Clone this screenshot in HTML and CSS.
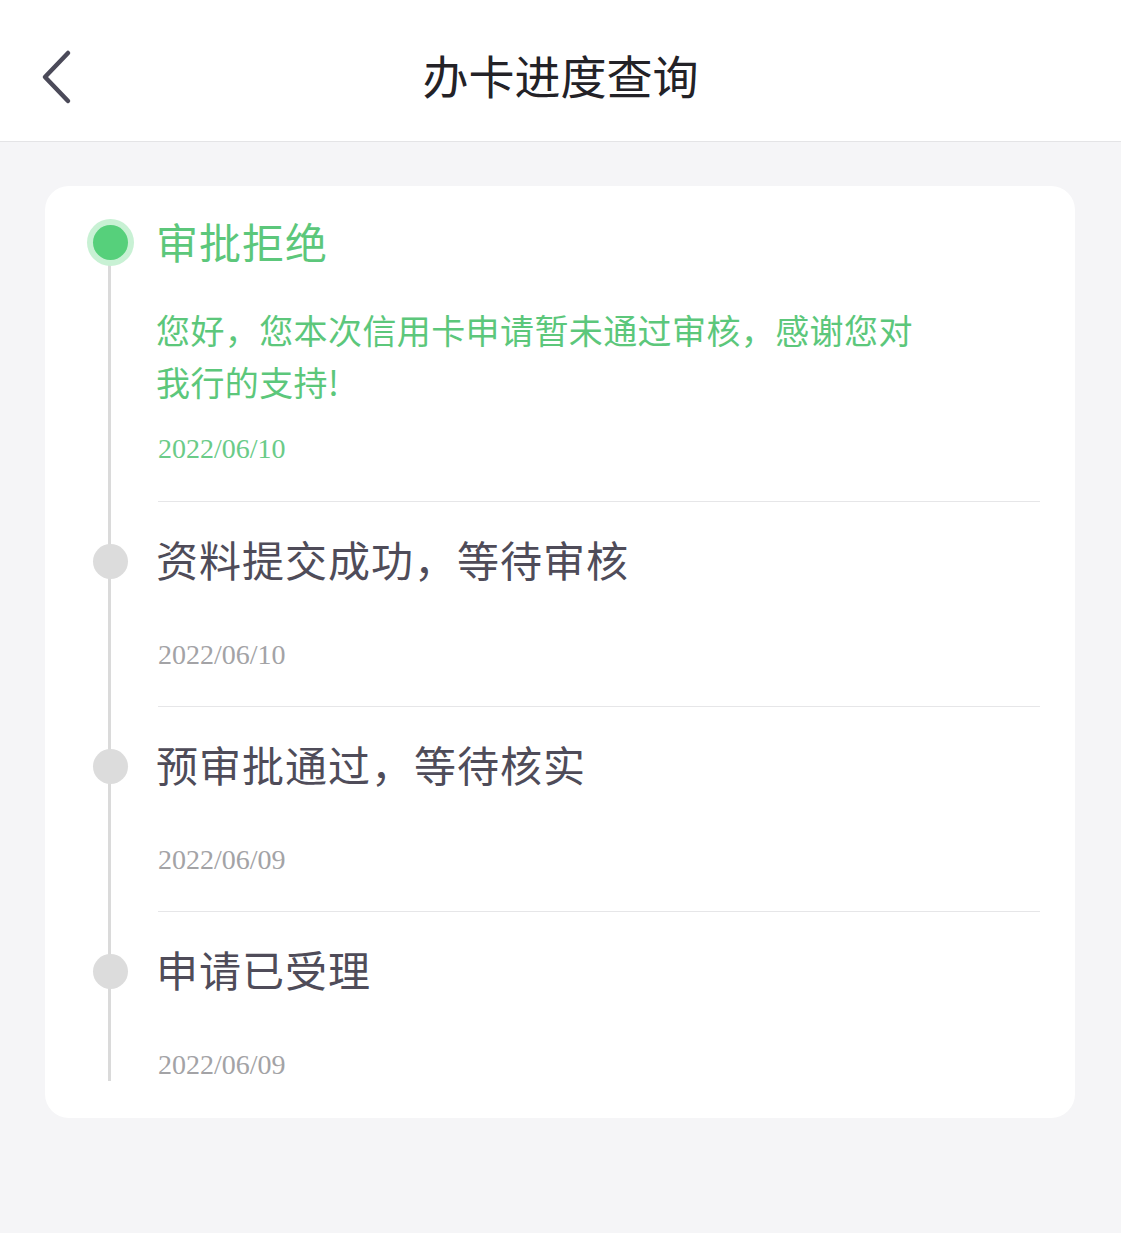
FILE: index.html
```html
<!DOCTYPE html>
<html lang="zh-CN">
<head>
  <meta charset="UTF-8">
  <title>办卡进度查询</title>
  <meta name="viewport" content="width=device-width, initial-scale=1.0">
  <link rel="stylesheet" href="styles.css">
</head>
<body>
  <header class="topbar">
    <a class="back" href="#">
      <svg width="40" height="60" viewBox="0 0 40 60">
        <polyline points="28,6 5,30 28,54" fill="none" stroke="#4b4a59" stroke-width="4.5" stroke-linecap="round" stroke-linejoin="round"/>
      </svg>
    </a>
    <h1>办卡进度查询</h1>
  </header>

  <!-- Progress timeline -->
  <div class="card">
    <div class="step active">
      <span class="dot"></span>
      <div class="step-title">审批拒绝</div>
      <p class="step-desc">您好，您本次信用卡申请暂未通过审核，感谢您对我行的支持!</p>
      <div class="step-date">2022/06/10</div>
    </div>
    <div class="step">
      <span class="dot"></span>
      <div class="step-title">资料提交成功，等待审核</div>
      <div class="step-date">2022/06/10</div>
    </div>
    <div class="step">
      <span class="dot"></span>
      <div class="step-title">预审批通过，等待核实</div>
      <div class="step-date">2022/06/09</div>
    </div>
    <div class="step">
      <span class="dot"></span>
      <div class="step-title">申请已受理</div>
      <div class="step-date">2022/06/09</div>
    </div>
  </div>
</body>
</html>
```

FILE: styles.css
```css
/* Card progress page */
body {
  margin: 0;
  background-color: #f5f5f7;
  font-family: "Noto Sans CJK SC", "Noto Sans", sans-serif;
}
.topbar {
  height: 142px;
  box-sizing: border-box;
  padding-top: 6px;
  background-color: #fff;
  border-bottom: 1px solid #e4e4e6;
  display: flex;
  align-items: center;
  justify-content: center;
  position: relative;
}
.topbar h1 {
  margin: 0;
  font-size: 46px;
  font-weight: 400;
  color: #232227;
  line-height: 1;
}
.back {
  position: absolute;
  left: 40px;
  top: 47px;
  display: block;
  width: 40px;
  height: 60px;
}
.card {
  margin: 44px 46px 0 45px;
  background-color: #fff;
  border-radius: 24px;
  padding: 0 35px 0 113px;
  position: relative;
}
.card::before {
  content: "";
  position: absolute;
  left: 63px;
  top: 56px;
  bottom: 37px;
  width: 3px;
  background-color: #dadada;
}
.step {
  position: relative;
  padding: 28px 0 33px;
  border-top: 1px solid #e6e6e8;
}
.step:first-child {
  border-top: none;
  padding-top: 26px;
  padding-bottom: 34px;
}
.step:last-child {
  padding-bottom: 35px;
}
.dot {
  position: absolute;
  left: -65px;
  top: 42px;
  width: 35px;
  height: 35px;
  border-radius: 50%;
  background-color: #dcdcdc;
}
.step.active .dot {
  top: 39px;
  background-color: #56d07b;
  box-shadow: 0 0 0 6px #c8f1d4;
}
.step-title {
  font-size: 42px;
  line-height: 58px;
  letter-spacing: 1px;
  margin-left: -2px;
  color: #4f4c59;
}
.step.active .step-title {
  color: #5cc77b;
}
.step-desc {
  margin: 34px 0 0 -2px;
  max-width: 780px;
  font-size: 34px;
  line-height: 52px;
  letter-spacing: 0.4px;
  color: #5cc77b;
}
.step-date {
  margin-top: 49px;
  font-family: "Liberation Serif", serif;
  font-size: 28px;
  line-height: 36px;
  color: #a3a3a6;
}
.step.active .step-date {
  margin-top: 23px;
  color: #6acb88;
}
```
